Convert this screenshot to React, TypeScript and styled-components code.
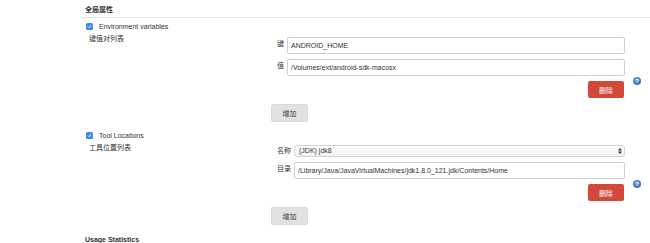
import React from 'react'
import styled, { createGlobalStyle } from 'styled-components'

const GlobalStyle = createGlobalStyle`
    html, body {
        margin: 0;
        background: #ffffff;
    }
    body {
        font-family: "Liberation Sans", Arial, "Noto Sans CJK SC", sans-serif;
        font-size: 7px;
        color: #333333;
    }
`

const Page = styled.div`
    width: 650px;
    height: 243px;
    overflow: hidden;
    padding-left: 80px;
    box-sizing: border-box;
`

const SectionHeader = styled.div`
    font-weight: bold;
    line-height: 10px;
    padding: 5px 0 2px 5px;
    border-bottom: 1px solid #e6e6e6;
`

const Block = styled.div`
    margin-top: 3px;
    padding-bottom: 5px;
`

const CheckRow = styled.label`
    display: flex;
    align-items: center;
    gap: 6px;
    height: 10px;
    padding-left: 6px;
`

const CheckBox = styled.span`
    width: 7px;
    height: 7px;
    border-radius: 1.5px;
    background: #3d8be8;
    display: flex;
    align-items: center;
    justify-content: center;
`

const Body = styled.div`
    margin-top: 3px;
    display: grid;
    grid-template-columns: 191px 354px 25px;
    grid-template-areas:
        "desc fields ."
        ". actions help"
        ". add .";
`

const Desc = styled.div`
    grid-area: desc;
    padding-left: 9px;
    line-height: 10px;
`

const Fields = styled.div<{ $top: number }>`
    grid-area: fields;
    padding-top: ${p => p.$top}px;
    display: flex;
    flex-direction: column;
    gap: 5px;
`

const FieldRow = styled.div`
    display: flex;
    align-items: flex-start;
    gap: 3px;
    padding-left: 6px;
`

const FieldLabel = styled.span<{ $pad: number }>`
    line-height: 10px;
    padding-top: ${p => p.$pad}px;
    white-space: nowrap;
`

const TextField = styled.div`
    flex: 1;
    min-width: 0;
    height: 17px;
    box-sizing: border-box;
    border: 1px solid #cfcfcf;
    border-radius: 2px;
    padding: 0 3px;
    line-height: 15px;
    color: #333333;
    background: #ffffff;
    white-space: nowrap;
    overflow: hidden;
`

const SelectWrap = styled.div`
    flex: 1;
    position: relative;
`

const Select = styled.select`
    width: 100%;
    height: 12px;
    box-sizing: border-box;
    appearance: none;
    border: 1px solid #d3d3d3;
    border-radius: 3px;
    padding: 0 4px;
    font: inherit;
    line-height: 10px;
    color: #333333;
    background: linear-gradient(#ffffff, #f3f3f3);
    outline: none;
`

const SelectArrows = styled.svg`
    position: absolute;
    right: 3px;
    top: 3px;
    pointer-events: none;
`

const Actions = styled.div`
    grid-area: actions;
    margin-top: 5px;
    display: flex;
    justify-content: flex-end;
    padding-right: 1px;
`

const HelpCell = styled.div`
    grid-area: help;
    margin-top: 1px;
    padding-left: 8px;
`

const HelpIcon = styled.span`
    width: 8px;
    height: 8px;
    border-radius: 50%;
    background: radial-gradient(circle at 40% 35%, #6d9de0, #2c5fa8);
    color: #ffffff;
    font-weight: bold;
    font-size: 6px;
    line-height: 8px;
    text-align: center;
    display: block;
`

const DeleteButton = styled.button`
    width: 36px;
    height: 17px;
    border: none;
    border-radius: 2px;
    background: #d24939;
    color: #ffffff;
    font: inherit;
    padding: 0;
`

const AddRow = styled.div`
    grid-area: add;
    margin-top: 6px;
`

const AddButton = styled.button`
    width: 37px;
    height: 18px;
    border: 1px solid #dadada;
    border-radius: 2px;
    background: #e2e2e2;
    color: #444444;
    font: inherit;
    padding: 0;
`

function Check() {
    return (
        <CheckBox>
            <svg width="5" height="5" viewBox="0 0 10 10">
                <path d="M2 5.2 L4.2 7.4 L8.2 2.6" fill="none" stroke="#ffffff" strokeWidth="1.8" />
            </svg>
        </CheckBox>
    )
}

type Field =
    | { kind: 'input'; label: string; value: string }
    | { kind: 'select'; label: string; value: string }

function Option({ title, desc, fields, top }: { title: string; desc: string; fields: Field[]; top: number }) {
    return (
        <Block>
            <CheckRow>
                <Check />
                <span>{title}</span>
            </CheckRow>
            <Body>
                <Desc>{desc}</Desc>
                <Fields $top={top}>
                    {fields.map(f => (
                        <FieldRow key={f.label}>
                            <FieldLabel $pad={f.kind === 'select' ? 1 : 2}>{f.label}</FieldLabel>
                            {f.kind === 'input' ? (
                                <TextField>{f.value}</TextField>
                            ) : (
                                <SelectWrap>
                                    <Select defaultValue={f.value}>
                                        <option>{f.value}</option>
                                    </Select>
                                    <SelectArrows width="4" height="6" viewBox="0 0 4 6">
                                        <path d="M0 2.4 L2 0 L4 2.4 Z M0 3.6 L2 6 L4 3.6 Z" fill="#333333" />
                                    </SelectArrows>
                                </SelectWrap>
                            )}
                        </FieldRow>
                    ))}
                </Fields>
                <Actions>
                    <DeleteButton>删除</DeleteButton>
                </Actions>
                <HelpCell>
                    <HelpIcon>?</HelpIcon>
                </HelpCell>
                <AddRow>
                    <AddButton>增加</AddButton>
                </AddRow>
            </Body>
        </Block>
    )
}

export default function App() {
    return (
        <Page>
            <GlobalStyle />
            <SectionHeader>全局属性</SectionHeader>
            <Option
                title="Environment variables"
                desc="键值对列表"
                top={3}
                fields={[
                    { kind: 'input', label: '键', value: 'ANDROID_HOME' },
                    { kind: 'input', label: '值', value: '/Volumes/ext/android-sdk-macosx' },
                ]}
            />
            <Option
                title="Tool Locations"
                desc="工具位置列表"
                top={2}
                fields={[
                    { kind: 'select', label: '名称', value: '(JDK) jdk8' },
                    { kind: 'input', label: '目录', value: '/Library/Java/JavaVirtualMachines/jdk1.8.0_121.jdk/Contents/Home' },
                ]}
            />
            <SectionHeader>Usage Statistics</SectionHeader>
        </Page>
    )
}
